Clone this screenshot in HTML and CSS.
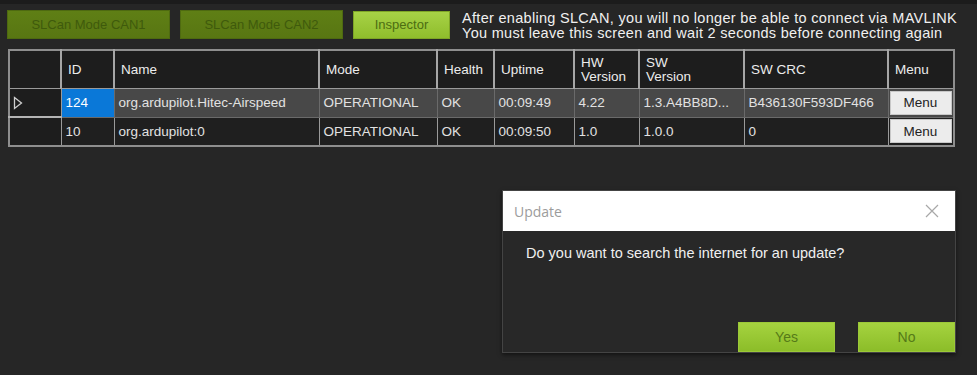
FILE: index.html
```html
<!DOCTYPE html>
<html lang="en">
<head>
    <meta charset="UTF-8">
    <title>UAVCAN Inspector</title>
    <link rel="stylesheet" href="styles.css">
</head>
<body>

    <!-- Top bar -->
    <div class="top-bar">
        <button class="mode-button">SLCan Mode CAN1</button>
        <button class="mode-button">SLCan Mode CAN2</button>
        <button class="inspector-button">Inspector</button>
        <div class="warning">
            After enabling SLCAN, you will no longer be able to connect via MAVLINK<br>
            You must leave this screen and wait 2 seconds before connecting again
        </div>
    </div>

    <!-- Node grid -->
    <table class="node-grid">
        <colgroup>
            <col style="width: 52px">
            <col style="width: 53px">
            <col style="width: 205px">
            <col style="width: 118px">
            <col style="width: 57px">
            <col style="width: 80px">
            <col style="width: 65px">
            <col style="width: 105px">
            <col style="width: 144px">
            <col style="width: 66px">
        </colgroup>
        <thead>
            <tr>
                <th class="row-head"></th>
                <th>ID</th>
                <th>Name</th>
                <th>Mode</th>
                <th>Health</th>
                <th>Uptime</th>
                <th>HW<br>Version</th>
                <th>SW<br>Version</th>
                <th>SW CRC</th>
                <th>Menu</th>
            </tr>
        </thead>
        <tbody>
            <tr class="selected">
                <td class="row-head">
                    <svg class="row-arrow" width="10" height="14" viewBox="0 0 10 14">
                        <path d="M1.5 1.5 L8.5 7 L1.5 12.5 Z" stroke="#cfcfcf" stroke-width="1.3" fill="none"/>
                    </svg>
                </td>
                <td class="current">124</td>
                <td>org.ardupilot.Hitec-Airspeed</td>
                <td>OPERATIONAL</td>
                <td>OK</td>
                <td>00:09:49</td>
                <td>4.22</td>
                <td>1.3.A4BB8D...</td>
                <td>B436130F593DF466</td>
                <td class="menu-cell"><button class="menu-button">Menu</button></td>
            </tr>
            <tr>
                <td class="row-head"></td>
                <td>10</td>
                <td>org.ardupilot:0</td>
                <td>OPERATIONAL</td>
                <td>OK</td>
                <td>00:09:50</td>
                <td>1.0</td>
                <td>1.0.0</td>
                <td>0</td>
                <td class="menu-cell"><button class="menu-button">Menu</button></td>
            </tr>
        </tbody>
    </table>

    <!-- Update dialog -->
    <div class="dialog">
        <div class="dialog-title">
            <span>Update</span>
            <svg class="close-icon" width="14" height="14" viewBox="0 0 14 14">
                <path d="M1 1 L13 13 M13 1 L1 13" stroke="#a8a8a8" stroke-width="1.2" fill="none"/>
            </svg>
        </div>
        <div class="dialog-body">
            <p>Do you want to search the internet for an update?</p>
            <div class="dialog-buttons">
                <button class="green-button">Yes</button>
                <button class="green-button">No</button>
            </div>
        </div>
    </div>

</body>
</html>
```

FILE: styles.css
```css
body {
    margin: 0;
    padding: 0;
    background-color: #262626;
    font-family: "Liberation Sans", Arial, sans-serif;
    color: #e6e6e6;
    width: 977px;
    height: 375px;
    overflow: hidden;
    position: relative;
    border-top: 4px solid #1c1c1c;
    box-sizing: border-box;
}

/* Top bar */
.top-bar {
    display: flex;
    align-items: center;
    padding: 6px 0 0 7px;
    height: 29px;
}

.mode-button,
.inspector-button {
    height: 29px;
    border: 1px solid #4e6a10;
    font-family: "Liberation Sans", Arial, sans-serif;
    font-size: 13px;
    padding: 0;
}

.mode-button {
    width: 163px;
    margin-right: 10px;
    background: linear-gradient(#5f7f15, #587612);
    color: #3f5a0c;
}

.inspector-button {
    width: 97px;
    height: 28px;
    margin-right: 12px;
    background: linear-gradient(#a7d246, #8fbd2c);
    border-color: #7ea526;
    color: #4c6d12;
}

.warning {
    font-size: 14.5px;
    letter-spacing: 0.3px;
    line-height: 15px;
    color: #f0f0f0;
    margin-top: 2px;
    white-space: nowrap;
}

/* Node grid */
.node-grid {
    margin: 10px 0 0 8px;
    width: 945px;
    table-layout: fixed;
    border-collapse: collapse;
    border: 2px solid #8e8e8e;
    font-size: 13.5px;
}

.node-grid th,
.node-grid td {
    border: 1px solid #9a9a9a;
    text-align: left;
    padding: 0 0 0 4px;
    white-space: nowrap;
    overflow: hidden;
}

.node-grid th {
    background-color: #1d1d1d;
    font-weight: normal;
    height: 37px;
    line-height: 14px;
    color: #ececec;
    padding-left: 6px;
    border-left: 2px solid #a6a6a6;
}

.node-grid td {
    height: 27px;
    background-color: #1f1f1f;
    color: #e2e2e2;
}

.node-grid tr.selected td {
    background-color: #484848;
    border-color: #6a6a6a;
}

.node-grid td.row-head,
.node-grid tr.selected td.row-head {
    background-color: #1d1d1d;
    border-color: #9a9a9a;
    padding-left: 3px;
}

.node-grid th.row-head {
    border-left: none;
}

.node-grid tr.selected td.row-head {
    border-bottom: 2px solid #b4b4b4;
}

.row-arrow {
    display: block;
}

.node-grid tr.selected td.current {
    background-color: #0a78d8;
    color: #ffffff;
}

.node-grid td.menu-cell {
    padding: 0 1px;
}

.menu-button {
    display: block;
    width: 62px;
    height: 24px;
    background-color: #ececec;
    border: 1px solid #c8c8c8;
    color: #222222;
    font-family: "Liberation Sans", Arial, sans-serif;
    font-size: 13.5px;
    padding: 0;
}

/* Update dialog */
.dialog {
    position: absolute;
    left: 502px;
    top: 186px;
    width: 454px;
    height: 163px;
    background-color: #282828;
    border: 1px solid #444444;
    box-sizing: border-box;
    box-shadow: 0 2px 4px rgba(0, 0, 0, 0.5);
}

.dialog-title {
    height: 40px;
    background-color: #ffffff;
    display: flex;
    align-items: center;
    justify-content: space-between;
    padding: 0 16px 0 11px;
    font-family: "Open Sans", "Liberation Sans", sans-serif;
    font-size: 14px;
    color: #9c9c9c;
}

.dialog-body {
    display: flex;
    flex-direction: column;
    height: 122px;
}

.dialog-body p {
    margin: 14px 0 0 23px;
    font-size: 14.5px;
    color: #f0f0f0;
}

.dialog-buttons {
    margin-top: auto;
    display: flex;
    justify-content: flex-end;
    gap: 23px;
    padding-bottom: 1px;
}

.green-button {
    width: 97px;
    height: 30px;
    background: linear-gradient(#a5d33f, #8cbd29);
    border: 1px solid #9cc938;
    color: #557a18;
    font-family: "Liberation Sans", Arial, sans-serif;
    font-size: 14px;
    padding: 0;
}
```
